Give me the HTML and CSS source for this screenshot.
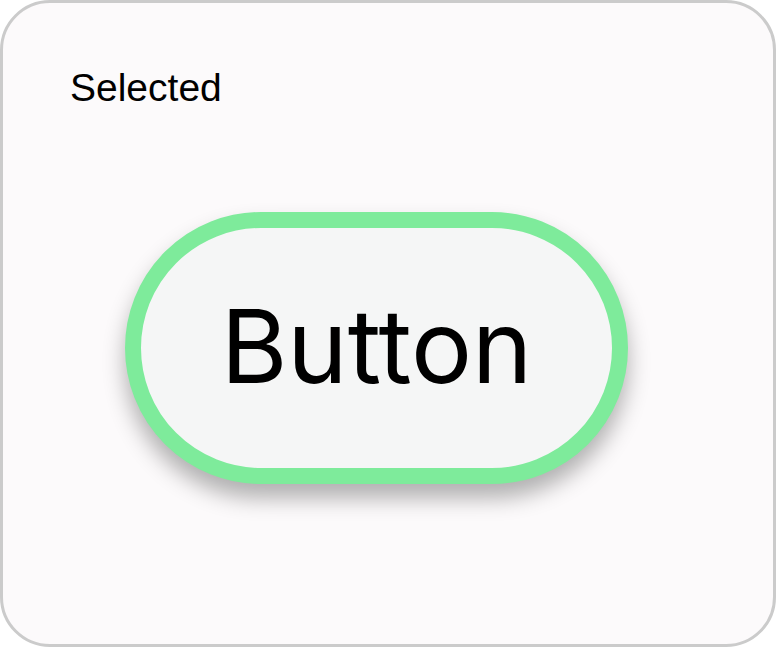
FILE: index.html
```html
<!DOCTYPE html>
<html lang="en">
<head>
    <meta charset="UTF-8">
    <meta name="viewport" content="width=device-width, initial-scale=1.0">
    <title>Selected</title>
    <link rel="stylesheet" href="styles.css">
</head>
<body>

<div class="card">
    <div class="label">Selected</div>
    <button class="pill" type="button">Button</button>
</div>

</body>
</html>
```

FILE: styles.css
```css
html, body {
    margin: 0;
    padding: 0;
    background-color: #ffffff;
}
.card {
    box-sizing: border-box;
    width: 776px;
    height: 647px;
    padding: 63px 0 0 67px;
    background-color: #fcfafb;
    border: 3px solid #cbcbcb;
    border-radius: 50px;
    display: flex;
    flex-direction: column;
    align-items: flex-start;
}
.label {
    font-family: "Liberation Sans", Arial, sans-serif;
    font-size: 39px;
    line-height: 44px;
    color: #000;
}
.pill {
    box-sizing: border-box;
    width: 503px;
    height: 272px;
    margin: 102px 0 0 55px;
    padding: 0 0 4px 0;
    background-color: #f5f6f6;
    border: 16px solid #7eeb9b;
    border-radius: 136px;
    box-shadow: 0 14px 22px rgba(0, 0, 0, 0.3);
    font-family: Inter, "Noto Sans", sans-serif;
    font-size: 102px;
    color: #000;
    cursor: pointer;
}
```
